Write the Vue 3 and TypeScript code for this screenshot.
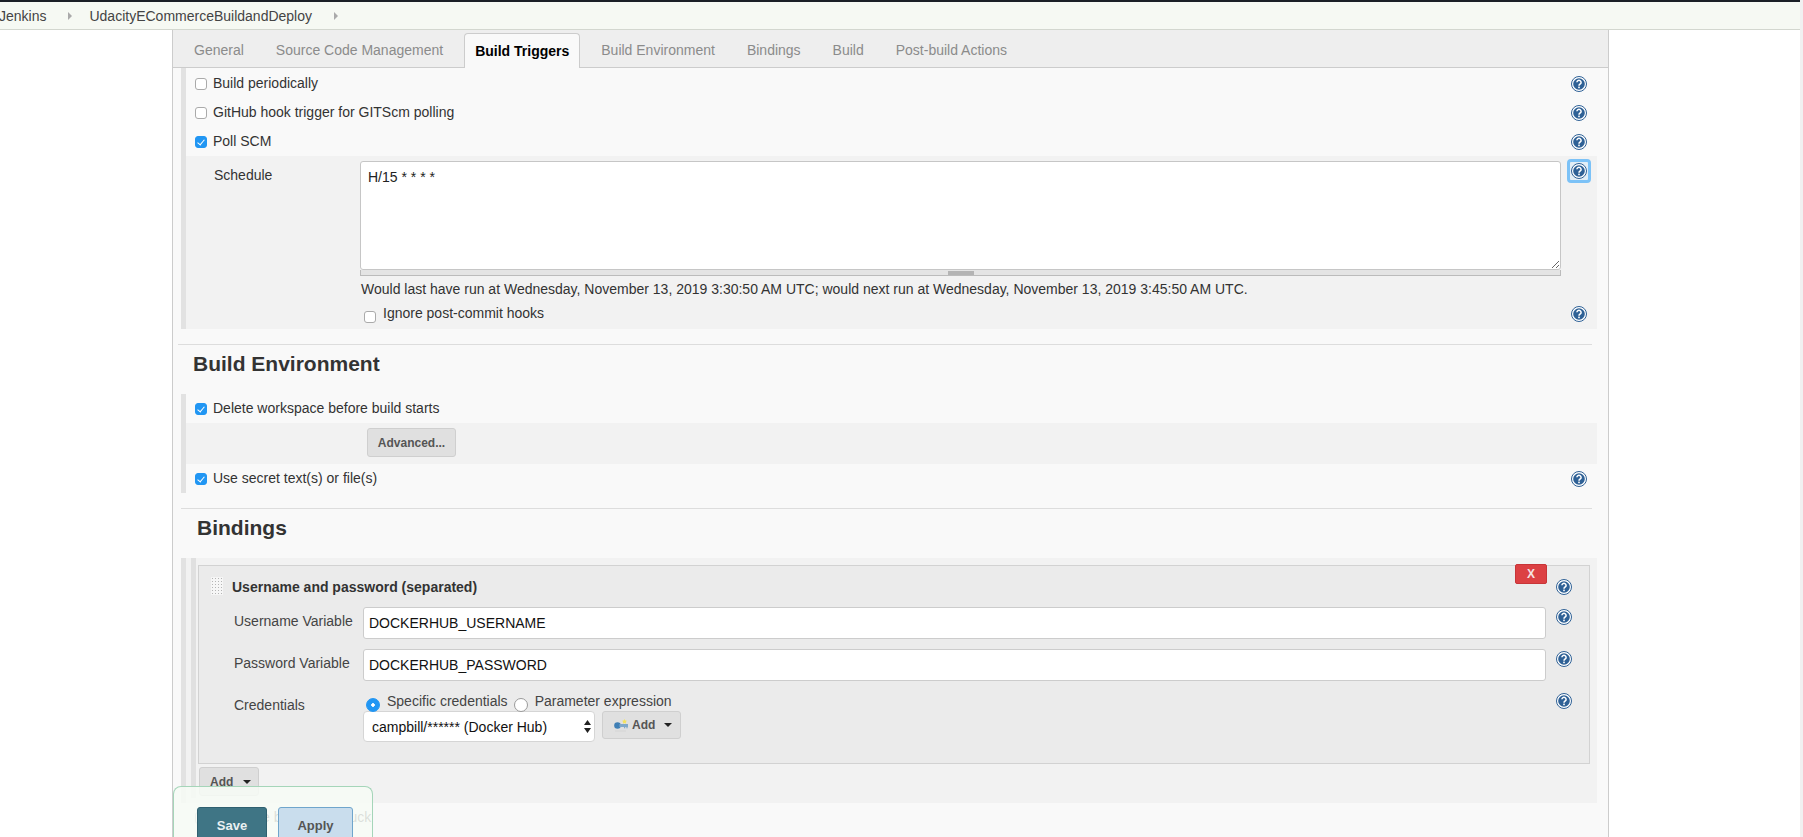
<script setup lang="ts">
// tabs across the top of the job config form
const tabs = [
  { name: 'General', active: false },
  { name: 'Source Code Management', active: false },
  { name: 'Build Triggers', active: true },
  { name: 'Build Environment', active: false },
  { name: 'Bindings', active: false },
  { name: 'Build', active: false },
  { name: 'Post-build Actions', active: false }
]

const triggers = [
  { label: 'Build periodically', checked: false },
  { label: 'GitHub hook trigger for GITScm polling', checked: false },
  { label: 'Poll SCM', checked: true }
]

const scheduleNote =
  'Would last have run at Wednesday, November 13, 2019 3:30:50 AM UTC; would next run at Wednesday, November 13, 2019 3:45:50 AM UTC.'
</script>

<template>
  <div class="page">
    <svg class="defs" width="0" height="0">
      <symbol id="help" viewBox="0 0 16 16">
        <circle cx="8" cy="8" r="7.5" fill="#fff" stroke="#2f6196" stroke-width="1" />
        <circle cx="8" cy="8" r="5.8" fill="#2f6196" />
        <path d="M5.9 6.3a2.1 2 0 1 1 3.3 1.7c-.8.5-1.2.9-1.2 1.7" fill="none" stroke="#fff" stroke-width="1.5" />
        <rect x="7.2" y="10.6" width="1.6" height="1.6" fill="#fff" />
      </symbol>
    </svg>

    <div class="content">
      <div class="top-line"></div>
      <nav class="breadcrumb">
        <span class="crumb first">Jenkins</span>
        <span class="chev"></span>
        <span class="crumb">UdacityECommerceBuildandDeploy</span>
        <span class="chev"></span>
      </nav>

      <main class="panel">
        <div class="tabbar">
          <div v-for="tab in tabs" :key="tab.name" class="tab" :class="{ active: tab.active }">{{ tab.name }}</div>
        </div>

        <!-- Build Triggers -->
        <section class="group triggers">
          <div v-for="t in triggers" :key="t.label" class="row">
            <input type="checkbox" class="check" :checked="t.checked" />
            <span class="row-label">{{ t.label }}</span>
            <svg class="help"><use href="#help" /></svg>
          </div>
          <div class="schedule">
            <div class="schedule-top">
              <label class="schedule-label">Schedule</label>
              <div class="schedule-field">
                <textarea class="cron" readonly>H/15 * * * *</textarea>
                <div class="grip"><span></span></div>
              </div>
              <span class="focus-ring"><svg class="help"><use href="#help" /></svg></span>
            </div>
            <div class="note">{{ scheduleNote }}</div>
            <div class="ignore">
              <input type="checkbox" class="check" />
              <span class="ignore-label">Ignore post-commit hooks</span>
              <svg class="help"><use href="#help" /></svg>
            </div>
          </div>
        </section>

        <hr class="rule env-rule" />
        <h2 class="heading env-heading">Build Environment</h2>

        <section class="group env">
          <div class="row">
            <input type="checkbox" class="check" checked />
            <span class="row-label">Delete workspace before build starts</span>
          </div>
          <div class="advanced-row">
            <button class="btn advanced">Advanced...</button>
          </div>
          <div class="row">
            <input type="checkbox" class="check" checked />
            <span class="row-label">Use secret text(s) or file(s)</span>
            <svg class="help"><use href="#help" /></svg>
          </div>
        </section>

        <hr class="rule bind-rule" />
        <h2 class="heading bind-heading">Bindings</h2>

        <section class="group bindings">
          <div class="binding-wrap">
            <div class="binding">
              <button class="delete">X</button>
              <div class="binding-head">
                <span class="drag"></span>
                <strong>Username and password (separated)</strong>
                <svg class="help"><use href="#help" /></svg>
              </div>
              <div class="field">
                <label>Username Variable</label>
                <input class="text" value="DOCKERHUB_USERNAME" />
                <svg class="help"><use href="#help" /></svg>
              </div>
              <div class="field">
                <label>Password Variable</label>
                <input class="text" value="DOCKERHUB_PASSWORD" />
                <svg class="help"><use href="#help" /></svg>
              </div>
              <div class="field creds">
                <label>Credentials</label>
                <div class="creds-body">
                  <div class="radios">
                    <input type="radio" name="cred" class="radio" checked />
                    <span class="radio-text">Specific credentials</span>
                    <input type="radio" name="cred" class="radio" />
                    <span class="radio-text">Parameter expression</span>
                  </div>
                  <div class="creds-select">
                    <div class="select-wrap">
                      <select class="select">
                        <option>campbill/****** (Docker Hub)</option>
                      </select>
                      <svg class="updown" width="7" height="13" viewBox="0 0 7 13">
                        <path d="M3.5 0 7 5H0zM3.5 13 0 8h7z" fill="#222" />
                      </svg>
                    </div>
                    <button class="btn add-key">
                      <svg width="14" height="14" viewBox="0 0 14 14">
                        <path d="M10.5 1l.8 1.600 1.700.2-1.200 1.200.3 1.700-1.600-.8-1.600.8.3-1.700L8 2.800l1.700-.2z" fill="#f4e35c" />
                        <circle cx="3.500" cy="7.500" r="3.300" fill="#3f7fb5" />
                        <rect x="5.500" y="6" width="8.500" height="3" fill="#7fa8c9" />
                        <rect x="10" y="9" width="1.200" height="1.300" fill="#7fa8c9" />
                        <rect x="12.400" y="9" width="1.200" height="1.300" fill="#7fa8c9" />
                        <rect x="1" y="12.500" width="11" height="1" fill="#d4d4d4" />
                      </svg>
                      <span>Add</span>
                      <i class="caret"></i>
                    </button>
                  </div>
                </div>
                <svg class="help"><use href="#help" /></svg>
              </div>
            </div>
            <button class="btn add-binding">Add <i class="caret"></i></button>
          </div>
        </section>

        <div class="row stuck">
          <input type="checkbox" class="check" />
          <span class="row-label">Abort the build if it's stuck</span>
        </div>
      </main>
    </div>

    <div class="rail"></div>

    <!-- sticky save bar sits on top of the form -->
    <div class="savebar">
      <button class="save">Save</button>
      <button class="apply">Apply</button>
    </div>
  </div>
</template>

<style>
html,
body {
  margin: 0;
  overflow: hidden;
  background: #fff;
}
</style>

<style scoped>
.page {
  position: relative;
  display: flex;
  height: 837px;
  overflow: hidden;
  font-family: "Liberation Sans", Arial, sans-serif;
  font-size: 14px;
  color: #333;
}

.defs {
  position: absolute;
}

.content {
  flex: 1;
  min-width: 0;
}

.rail {
  width: 3px;
  background: #f1f1f1;
}

.top-line {
  height: 2px;
  background: #1b1f26;
}

/* breadcrumb */
.breadcrumb {
  display: flex;
  align-items: center;
  height: 27px;
  background: #f6f9f3;
  border-bottom: 1px solid #d3d7cf;
}

.crumb {
  color: #444;
  font-size: 14px;
}

.crumb.first {
  margin-left: -1px;
}

.chev {
  width: 0;
  height: 0;
  margin: 0 17px 0 22px;
  border-left: 4px solid #aaa;
  border-top: 4px solid transparent;
  border-bottom: 4px solid transparent;
}

/* main form */
.panel {
  width: 1435px;
  height: 807px;
  margin-left: 172px;
  background: #f9f9f9;
  border-left: 1px solid #ccc;
  border-right: 1px solid #ccc;
}

.tabbar {
  display: flex;
  align-items: flex-end;
  gap: 10px;
  height: 37px;
  padding-left: 10px;
  background: #eee;
  border-bottom: 1px solid #ccc;
}

.tab {
  height: 32px;
  padding: 0 10px;
  border: 1px solid transparent;
  border-bottom: 0;
  line-height: 31px;
  color: #8b8b8b;
}

.tab.active {
  height: 34px;
  margin-bottom: -1px;
  background: #f9f9f9;
  border-color: #ccc;
  border-radius: 4px 4px 0 0;
  color: #000;
  font-weight: 700;
  line-height: 34px;
}

.group {
  margin: 0 11px 0 8px;
  border-left: 5px solid #e2e2e2;
}

.row {
  display: flex;
  align-items: center;
  height: 29px;
  padding: 0 10px 0 9px;
}

.check {
  appearance: none;
  position: relative;
  flex: none;
  width: 12px;
  height: 12px;
  margin: 1px 6px 0 0;
  background: #fff;
  border: 1px solid #aaa;
  border-radius: 3px;
}

.check:checked {
  background: #2196f3;
  border-color: #2196f3;
}

.check:checked::after {
  content: '';
  position: absolute;
  left: 3px;
  top: 1px;
  width: 3px;
  height: 6px;
  border: solid #fff;
  border-width: 0 1.5px 1.5px 0;
  transform: rotate(40deg);
}

.row-label {
  flex: 1;
  margin-bottom: 2px;
  color: #333;
}

.help {
  flex: none;
  width: 16px;
  height: 16px;
}

.triggers {
  margin-top: 0;
  padding-top: 1px;
}

.schedule {
  height: 173px;
  background: #f2f2f2;
}

.schedule-top {
  display: grid;
  grid-template-columns: 174px 1201px 24px;
  padding-top: 5px;
}

.schedule-label {
  padding: 6px 0 0 28px;
  line-height: 16px;
}

.cron {
  display: block;
  box-sizing: border-box;
  width: 100%;
  height: 109px;
  padding: 7px 7px;
  background: #fff;
  border: 1px solid #c6c6c6;
  border-radius: 3px;
  outline: 0;
  font: 14px/16px "Liberation Sans", Arial, sans-serif;
  color: #222;
  resize: vertical;
}

.grip {
  display: flex;
  justify-content: center;
  box-sizing: border-box;
  height: 6px;
  background: #e4e4e4;
  border-bottom: 1px solid #bbb;
  border-right: 1px solid #bbb;
  border-left: 1px solid #bbb;
}

.grip span {
  width: 26px;
  height: 4px;
  margin-top: 1px;
  background: #b4b4b4;
}

.focus-ring {
  display: flex;
  align-items: center;
  justify-content: center;
  box-sizing: border-box;
  width: 24px;
  height: 24px;
  margin: -2px 0 0 6px;
  background: #e3eef6;
  border: 3px solid #7cc2f7;
  border-radius: 4px;
}

.note {
  margin: 4px 0 0 175px;
  line-height: 18px;
}

.ignore {
  display: flex;
  align-items: center;
  height: 16px;
  margin-top: 8px;
  padding: 0 10px 0 178px;
}

.ignore .check {
  margin: 5px 7px 0 0;
}

.ignore-label {
  flex: 1;
  margin-bottom: 2px;
}

.rule {
  height: 1px;
  margin: 0;
  background: #ddd;
  border: 0;
}

.env-rule {
  margin: 15px 16px 0 5px;
}

.bind-rule {
  margin: 15px 16px 0 8px;
}

.heading {
  margin: 0;
  font-size: 21px;
  font-weight: 700;
  line-height: 24px;
  color: #333;
}

.env-heading {
  padding: 7px 0 0 20px;
  height: 42px;
}

.bind-heading {
  padding: 7px 0 0 24px;
  height: 42px;
}

.advanced-row {
  display: flex;
  align-items: flex-start;
  height: 41px;
  padding: 5px 0 0 181px;
  box-sizing: border-box;
  background: #f2f2f2;
}

.btn {
  box-sizing: border-box;
  background: #e0e0e0;
  border: 1px solid #cfcfcf;
  border-radius: 3px;
  font: 700 12px "Liberation Sans", Arial, sans-serif;
  color: #555;
  padding: 0;
}

.advanced {
  width: 89px;
  height: 29px;
}

.caret {
  display: inline-block;
  width: 0;
  height: 0;
  border-top: 4px solid #222;
  border-left: 4px solid transparent;
  border-right: 4px solid transparent;
  vertical-align: middle;
}

.bindings {
  height: 245px;
  background: #f2f2f2;
}

.binding-wrap {
  height: 240px;
  margin-left: 5px;
  padding: 7px 0 0 0;
  box-sizing: border-box;
  border-left: 5px solid #e0e0e0;
  position: relative;
}

.binding {
  position: relative;
  box-sizing: border-box;
  height: 199px;
  margin: 0 7px 0 2px;
  background: #ebebeb;
  border: 1px solid #d2d2d2;
}

.delete {
  position: absolute;
  top: -2px;
  right: 42px;
  width: 32px;
  height: 20px;
  padding: 0;
  background: #dc4043;
  border: 1px solid #c73538;
  border-radius: 2px;
  font: 700 12px "Liberation Sans", Arial, sans-serif;
  color: #f6e2e2;
}

.binding-head {
  display: flex;
  align-items: center;
  height: 41px;
  padding: 0 17px 0 12px;
}

.binding-head strong {
  flex: 1;
  font-size: 14px;
  color: #333;
}

.drag {
  flex: none;
  width: 12px;
  height: 18px;
  margin: -1px 9px 0 0;
  background-color: #f6f6f6;
  background-image: radial-gradient(circle, #b5b5b5 0.8px, transparent 1px);
  background-size: 3px 3px;
}

.field {
  display: grid;
  grid-template-columns: 129px 1183px 26px;
  padding-left: 35px;
  height: 42px;
}

.field label {
  padding-top: 6px;
  line-height: 16px;
  color: #444;
}

.field .help {
  margin: 2px 0 0 10px;
}

.text {
  box-sizing: border-box;
  width: 100%;
  height: 32px;
  padding: 0 5px;
  background: #fff;
  border: 1px solid #ccc;
  border-radius: 3px;
  font: 14px "Liberation Sans", Arial, sans-serif;
  color: #111;
}

.creds {
  margin-top: 2px;
  height: auto;
}

.creds label {
  padding-top: 4px;
}

.creds .help {
  margin-top: 0;
}

.radios {
  display: flex;
  height: 18px;
  position: relative;
  z-index: 1;
}

.radio {
  appearance: none;
  flex: none;
  box-sizing: border-box;
  width: 14px;
  height: 14px;
  margin: 5px 0 0 3px;
  background: #fff;
  border: 1px solid #9a9a9a;
  border-radius: 50%;
}

.radio:checked {
  background: radial-gradient(circle, #fff 0 1.5px, #2196f3 2px);
  border-color: #2196f3;
}

.radio-text {
  margin: 0 3px 0 7px;
  line-height: 16px;
  color: #444;
}

.creds-select {
  display: flex;
  gap: 7px;
}

.select-wrap {
  position: relative;
  width: 232px;
  height: 31px;
}

.select {
  appearance: none;
  box-sizing: border-box;
  width: 100%;
  height: 31px;
  padding: 0 8px;
  background: #fff;
  border: 1px solid #d5d5d5;
  border-radius: 4px;
  font: 14px "Liberation Sans", Arial, sans-serif;
  color: #111;
}

.updown {
  position: absolute;
  right: 4px;
  top: 9px;
}

.add-key {
  display: flex;
  align-items: center;
  width: 79px;
  height: 28px;
  padding-left: 11px;
}

.add-key span {
  margin: 0 9px 0 4px;
}

.add-binding {
  display: block;
  width: 60px;
  height: 29px;
  margin: 3px 0 0 3px;
  padding-left: 10px;
  position: relative;
  text-align: left;
}

.add-binding .caret {
  margin-left: 6px;
}

.stuck {
  margin-top: 0;
  padding-left: 22px;
}

/* bottom save bar */
.savebar {
  position: absolute;
  left: 173px;
  top: 786px;
  display: flex;
  gap: 11px;
  box-sizing: border-box;
  width: 200px;
  height: 60px;
  padding: 20px 0 0 23px;
  background: rgba(247, 251, 246, 0.86);
  border: 1px solid #a5d5b9;
  border-bottom: 0;
  border-radius: 8px 8px 0 0;
}

.save,
.apply {
  box-sizing: border-box;
  height: 37px;
  padding: 0;
  border-radius: 3px;
  font: 700 13px "Liberation Sans", Arial, sans-serif;
}

.save {
  width: 70px;
  background: #3f7585;
  border: 1px solid #2f6070;
  color: #e9f0f2;
}

.apply {
  width: 75px;
  background: #c9dded;
  border: 1px solid #6fa5cc;
  color: #555;
}
</style>
